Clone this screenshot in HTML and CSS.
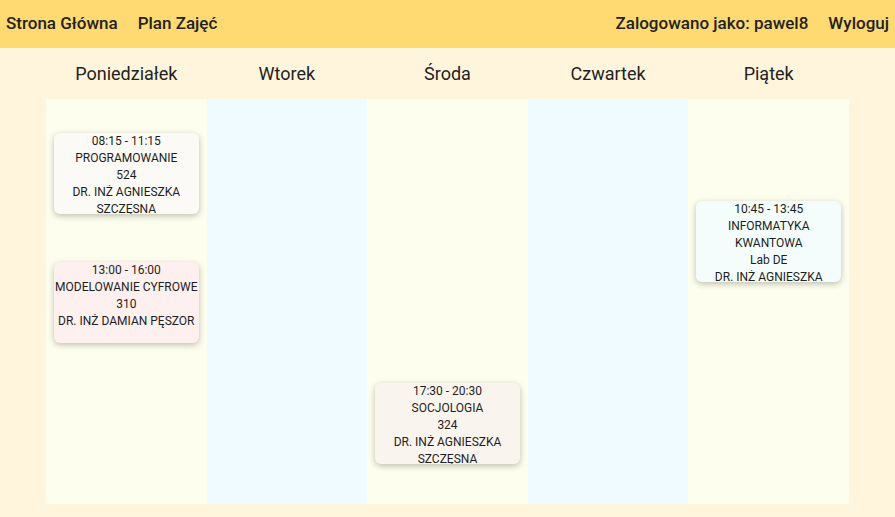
FILE: index.html
```html
<!DOCTYPE html>
<html lang="pl">
<head>
<meta charset="utf-8">
<title>Plan Zajęć</title>
<link rel="stylesheet" href="styles.css">
</head>
<body>
<nav class="navbar">
  <div class="nav-left">
    <a class="nav-link" href="#">Strona Główna</a>
    <a class="nav-link" href="#">Plan Zajęć</a>
  </div>
  <div class="nav-right">
    <span class="nav-link">Zalogowano jako: pawel8</span>
    <a class="nav-link" href="#">Wyloguj</a>
  </div>
</nav>
<main class="schedule">
  <section class="day">
    <h2 class="day-name">Poniedziałek</h2>
    <div class="day-body odd">
      <div class="event c1" style="top: 34px">
        <div>08:15 - 11:15</div><div>PROGRAMOWANIE</div><div>524</div><div>DR. INŻ AGNIESZKA SZCZĘSNA</div>
      </div>
      <div class="event c2" style="top: 163px">
        <div>13:00 - 16:00</div><div>MODELOWANIE CYFROWE</div><div>310</div><div>DR. INŻ DAMIAN PĘSZOR</div>
      </div>
    </div>
  </section>
  <section class="day">
    <h2 class="day-name">Wtorek</h2>
    <div class="day-body even"></div>
  </section>
  <section class="day">
    <h2 class="day-name">Środa</h2>
    <div class="day-body odd">
      <div class="event c3" style="top: 284px">
        <div>17:30 - 20:30</div><div>SOCJOLOGIA</div><div>324</div><div>DR. INŻ AGNIESZKA SZCZĘSNA</div>
      </div>
    </div>
  </section>
  <section class="day">
    <h2 class="day-name">Czwartek</h2>
    <div class="day-body even"></div>
  </section>
  <section class="day">
    <h2 class="day-name">Piątek</h2>
    <div class="day-body odd">
      <div class="event c4" style="top: 102px">
        <div>10:45 - 13:45</div><div>INFORMATYKA KWANTOWA</div><div>Lab DE</div><div>DR. INŻ AGNIESZKA SZCZĘSNA</div>
      </div>
    </div>
  </section>
</main>
</body>
</html>
```

FILE: styles.css
```css
* { box-sizing: border-box; }
html, body {
  margin: 0;
  padding: 0;
  background: #fff5dc;
  font-family: Roboto, "Noto Sans", sans-serif;
  color: #222;
}
.navbar {
  height: 48px;
  background: #ffd972;
  display: flex;
  justify-content: space-between;
  align-items: center;
  padding: 0 6px 3px;
}
.nav-left, .nav-right {
  display: flex;
  gap: 20px;
  align-items: center;
}
.nav-link {
  font-size: 17px;
  font-weight: 500;
  color: #222;
  text-decoration: none;
}
.schedule {
  display: grid;
  grid-template-columns: repeat(5, 1fr);
  margin: 0 46px;
}
.day-name {
  margin: 0;
  height: 51px;
  display: flex;
  align-items: center;
  justify-content: center;
  font-size: 18px;
  font-weight: 400;
  color: #222;
}
.day-body {
  position: relative;
  height: 405px;
}
.day-body.odd { background: #fefeee; }
.day-body.even { background: #f0fbff; }
.event {
  position: absolute;
  left: 8px;
  right: 8px;
  height: 81px;
  overflow: hidden;
  border-radius: 6px;
  box-shadow: 0 2px 6px rgba(0, 0, 0, 0.25);
  text-align: center;
  font-size: 12px;
  line-height: 17px;
  color: #1e1e1e;
}
.c1 { background: #fcfaf6; }
.c2 { background: #fdf0ee; }
.c3 { background: #faf4ef; }
.c4 { background: #f4fdfb; }
```
